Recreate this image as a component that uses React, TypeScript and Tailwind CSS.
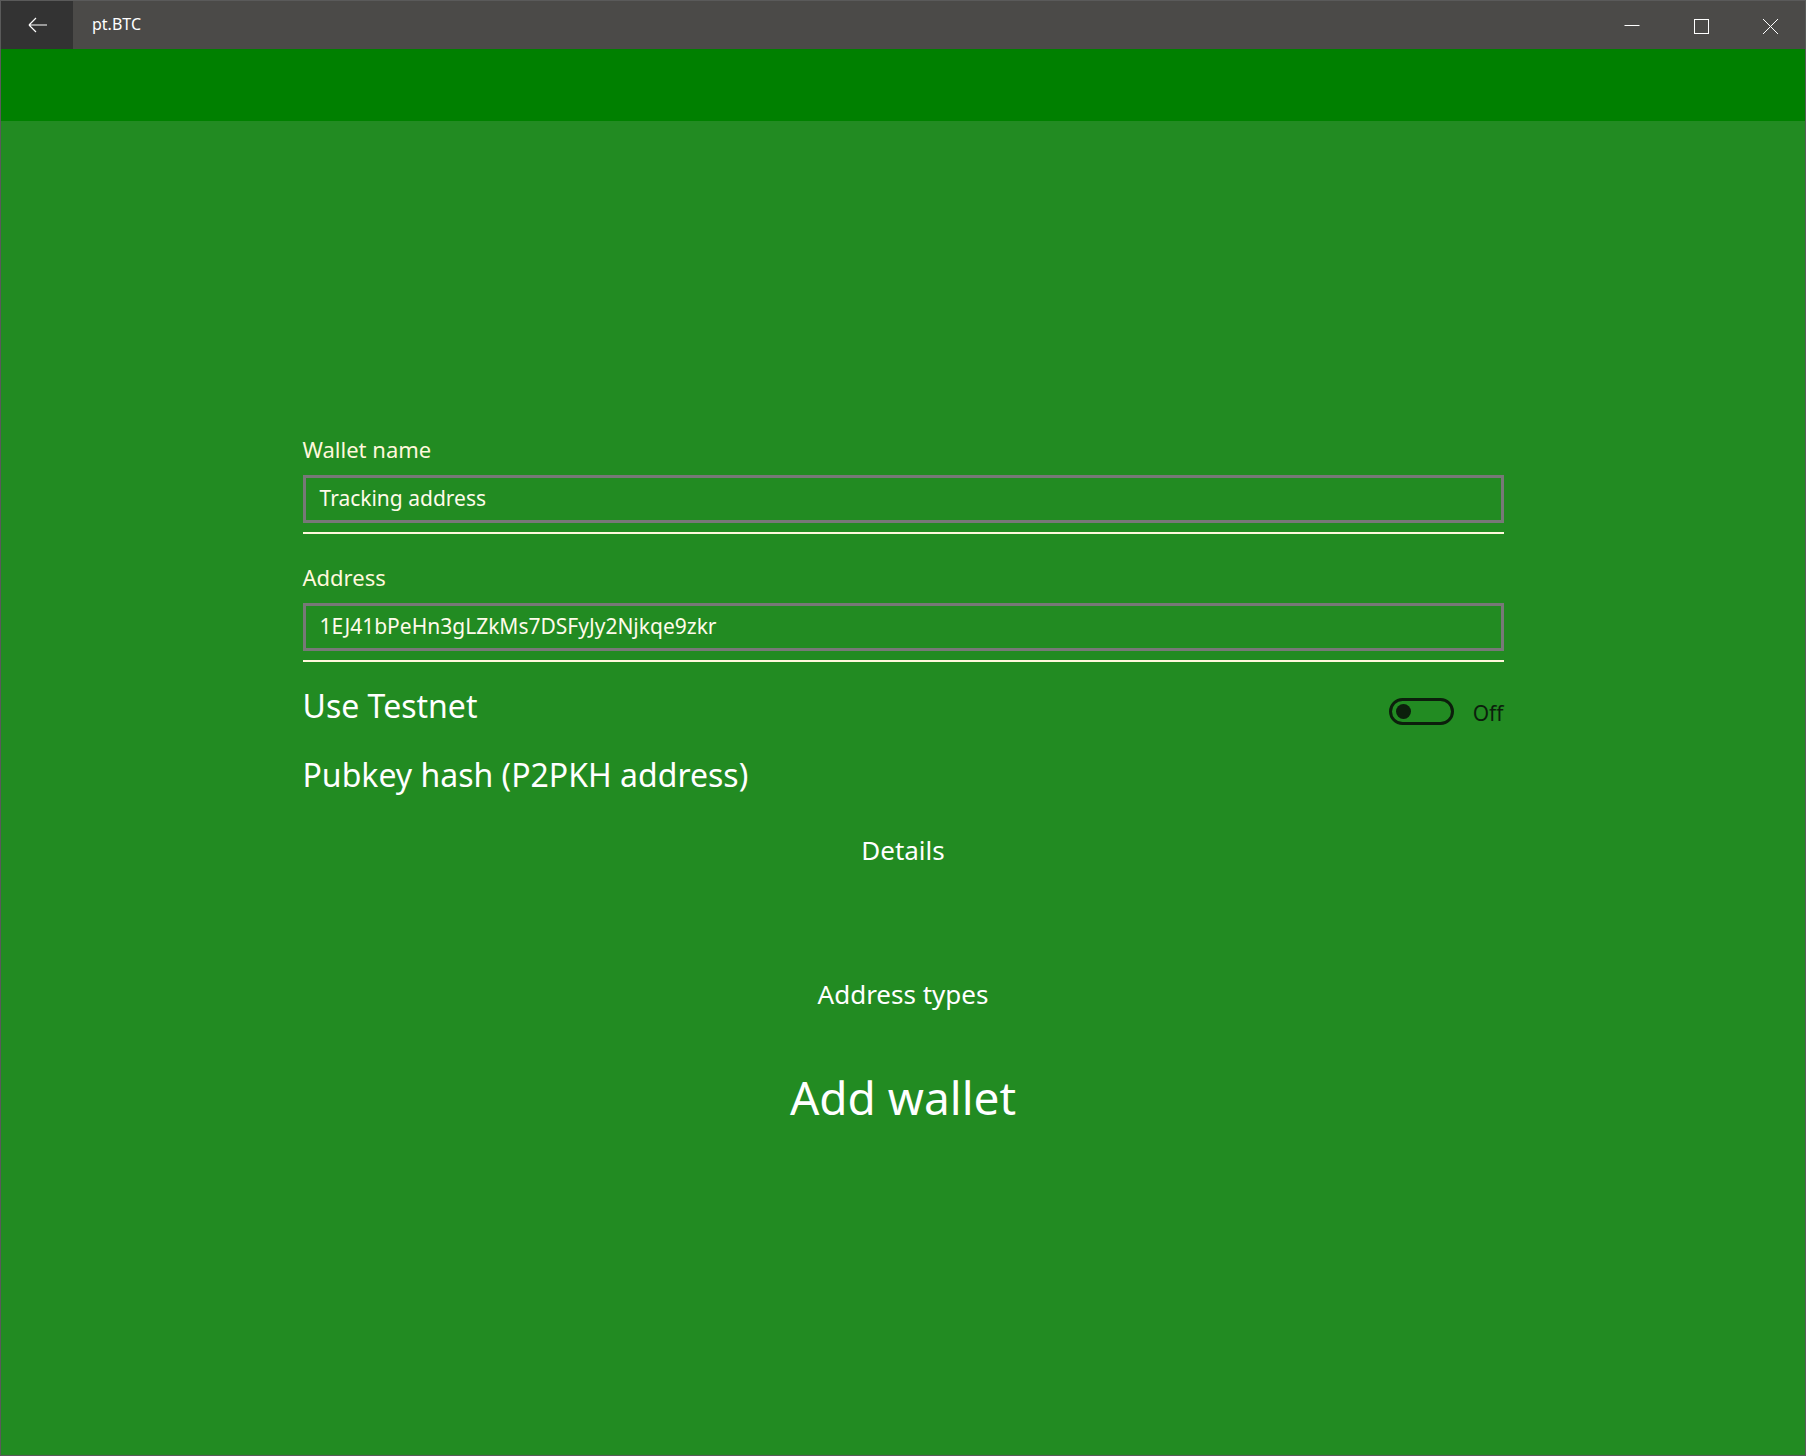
import React from "react";

const font = { fontFamily: '"Noto Sans", "Open Sans", sans-serif' };

function TitleBar() {
  return (
    <div className="h-[48px] flex items-stretch bg-[#4b4a48] shrink-0">
      <div className="w-[72px] bg-[#333333] flex items-center justify-center">
        <svg width="20" height="16" viewBox="0 0 20 16" className="ml-[2px]">
          <path d="M1 8 H19 M1 8 L8 1 M1 8 L8 15" stroke="#ffffff" strokeWidth="1.2" fill="none" />
        </svg>
      </div>
      <div className="pl-[19px] flex items-center text-[16px] text-white pb-[2px]">pt.BTC</div>
      <div className="flex-1" />
      <div className="flex items-start mr-[1px]">
        <div className="w-[69px] h-[48px] flex justify-center pt-[17px]">
          <svg width="16" height="16" viewBox="0 0 16 16">
            <path d="M0.5 7.5 H15.5" stroke="#ffffff" strokeWidth="1" fill="none" />
          </svg>
        </div>
        <div className="w-[69px] h-[48px] flex justify-center pt-[17px]">
          <svg width="16" height="16" viewBox="0 0 16 16">
            <rect x="1.5" y="1.5" width="14" height="14" stroke="#ffffff" strokeWidth="1" fill="none" />
          </svg>
        </div>
        <div className="w-[69px] h-[48px] flex justify-center pt-[17px]">
          <svg width="16" height="16" viewBox="0 0 16 16">
            <path d="M1 1 L16 16 M16 1 L1 16" stroke="#ffffff" strokeWidth="1" fill="none" />
          </svg>
        </div>
      </div>
    </div>
  );
}

function Field({ label, value }: { label: string; value: string }) {
  return (
    <div className="flex flex-col">
      <div className="text-[22px] leading-[28px] text-[#fff8dc]">{label}</div>
      <div className="mt-[12px] h-[48px] border-[3px] border-[#787878] flex items-center pl-[14px] text-[21px] text-[#fffbea]">
        {value}
      </div>
      <div className="mt-[9px] h-[2px] bg-[#fff8dc]" />
    </div>
  );
}

export default function App() {
  return (
    <div style={font} className="w-[1806px] h-[1456px] border border-[#5a5a5a] bg-[#228b22] flex flex-col overflow-hidden">
      <TitleBar />
      <div className="h-[72px] bg-[#008000] shrink-0" />
      <div className="w-[1201px] mx-auto pt-[314px] flex flex-col">
        <Field label="Wallet name" value="Tracking address" />
        <div className="mt-[29px]">
          <Field label="Address" value="1EJ41bPeHn3gLZkMs7DSFyJy2Njkqe9zkr" />
        </div>
        <div className="mt-[24px] flex items-start justify-between">
          <div className="text-[32px] leading-[40px] text-white">Use Testnet</div>
          <div className="flex items-start mt-[12px]">
            <div className="w-[65px] h-[27px] rounded-full border-[3px] border-[#0c1f0c] flex items-center pl-[4px]">
              <div className="w-[15px] h-[15px] rounded-full bg-[#0c1f0c]" />
            </div>
            <div className="ml-[19px] mt-[1px] text-[21px] leading-[28px] text-[#0c1f0c]">Off</div>
          </div>
        </div>
        <div className="mt-[28px] text-[32px] leading-[40px] text-white">Pubkey hash (P2PKH address)</div>
        <div className="mt-[38px] text-center text-[26px] leading-[34px] text-white">Details</div>
        <div className="mt-[110px] text-center text-[26px] leading-[34px] text-white">Address types</div>
        <div className="mt-[56px] text-center text-[46px] leading-[60px] text-white">Add wallet</div>
      </div>
    </div>
  );
}
